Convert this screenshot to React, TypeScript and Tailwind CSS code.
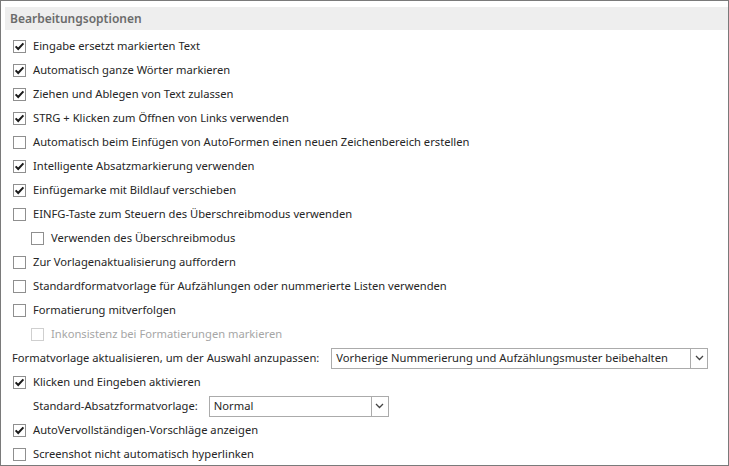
import React from "react";

type Row =
  | { kind: "check"; label: string; checked?: boolean; indent?: boolean; disabled?: boolean }
  | { kind: "select"; label: string; value: string; indent?: boolean; width: string };

const rows: Row[] = [
  { kind: "check", label: "Eingabe ersetzt markierten Text", checked: true },
  { kind: "check", label: "Automatisch ganze Wörter markieren", checked: true },
  { kind: "check", label: "Ziehen und Ablegen von Text zulassen", checked: true },
  { kind: "check", label: "STRG + Klicken zum Öffnen von Links verwenden", checked: true },
  { kind: "check", label: "Automatisch beim Einfügen von AutoFormen einen neuen Zeichenbereich erstellen" },
  { kind: "check", label: "Intelligente Absatzmarkierung verwenden", checked: true },
  { kind: "check", label: "Einfügemarke mit Bildlauf verschieben", checked: true },
  { kind: "check", label: "EINFG-Taste zum Steuern des Überschreibmodus verwenden" },
  { kind: "check", label: "Verwenden des Überschreibmodus", indent: true },
  { kind: "check", label: "Zur Vorlagenaktualisierung auffordern" },
  { kind: "check", label: "Standardformatvorlage für Aufzählungen oder nummerierte Listen verwenden" },
  { kind: "check", label: "Formatierung mitverfolgen" },
  { kind: "check", label: "Inkonsistenz bei Formatierungen markieren", indent: true, disabled: true },
  {
    kind: "select",
    label: "Formatvorlage aktualisieren, um der Auswahl anzupassen:",
    value: "Vorherige Nummerierung und Aufzählungsmuster beibehalten",
    width: "w-[377px]",
  },
  { kind: "check", label: "Klicken und Eingeben aktivieren", checked: true },
  {
    kind: "select",
    label: "Standard-Absatzformatvorlage:",
    value: "Normal",
    indent: true,
    width: "w-[180px]",
  },
  { kind: "check", label: "AutoVervollständigen-Vorschläge anzeigen", checked: true },
  { kind: "check", label: "Screenshot nicht automatisch hyperlinken" },
];

const Checkbox = ({ checked, disabled }: { checked?: boolean; disabled?: boolean }) => (
  <div
    className={`flex h-[13px] w-[13px] shrink-0 items-center justify-center border bg-white ${
      disabled ? "border-[#cfcfcf]" : "border-[#8f8f8f]"
    }`}
  >
    {checked && (
      <svg width="11" height="11" viewBox="0 0 11 11">
        <path d="M1.6 5.4 L4.2 8 L9.4 2.4" fill="none" stroke="#1a1a1a" strokeWidth="2" />
      </svg>
    )}
  </div>
);

const Chevron = () => (
  <svg width="9" height="6" viewBox="0 0 9 6">
    <path d="M1 1 L4.5 4.5 L8 1" fill="none" stroke="#444" strokeWidth="1.3" />
  </svg>
);

export default function App() {
  return (
    <div
      className="h-[466px] w-[729px] overflow-hidden border border-[#7a7a7a] bg-white text-[11.2px] text-[#262626]"
      style={{ fontFamily: '"Noto Sans", "Open Sans", sans-serif' }}
    >
      <div className="ml-[4px] mt-[6px] flex h-[23px] items-center bg-[#eeeeee] pl-[5px]">
        <span className="text-[12px] font-semibold text-[#6b6b6b]">Bearbeitungsoptionen</span>
      </div>
      <div className="mt-[4px] flex flex-col whitespace-nowrap">
        {rows.map((row, i) =>
          row.kind === "check" ? (
            <div
              key={i}
              className={`flex h-[24px] items-center ${row.indent ? "pl-[30px]" : "pl-[12px]"}`}
            >
              <Checkbox checked={row.checked} disabled={row.disabled} />
              <span className={`ml-[7px] ${row.disabled ? "text-[#a6a6a6]" : ""}`}>{row.label}</span>
            </div>
          ) : (
            <div
              key={i}
              className={`flex h-[24px] items-center ${row.indent ? "pl-[32px]" : "pl-[11px]"}`}
            >
              <span className="shrink-0">{row.label}</span>
              <div
                className={`ml-auto mr-auto flex h-[21px] shrink-0 ${row.width} items-center justify-between border border-[#ababab] bg-white pl-[4px] ${
                  row.indent ? "!ml-[11px]" : "!ml-[12px]"
                }`}
              >
                <span>{row.value}</span>
                <div className="flex h-full w-[17px] items-center justify-center border-l border-[#ababab]">
                  <Chevron />
                </div>
              </div>
            </div>
          ),
        )}
      </div>
    </div>
  );
}
